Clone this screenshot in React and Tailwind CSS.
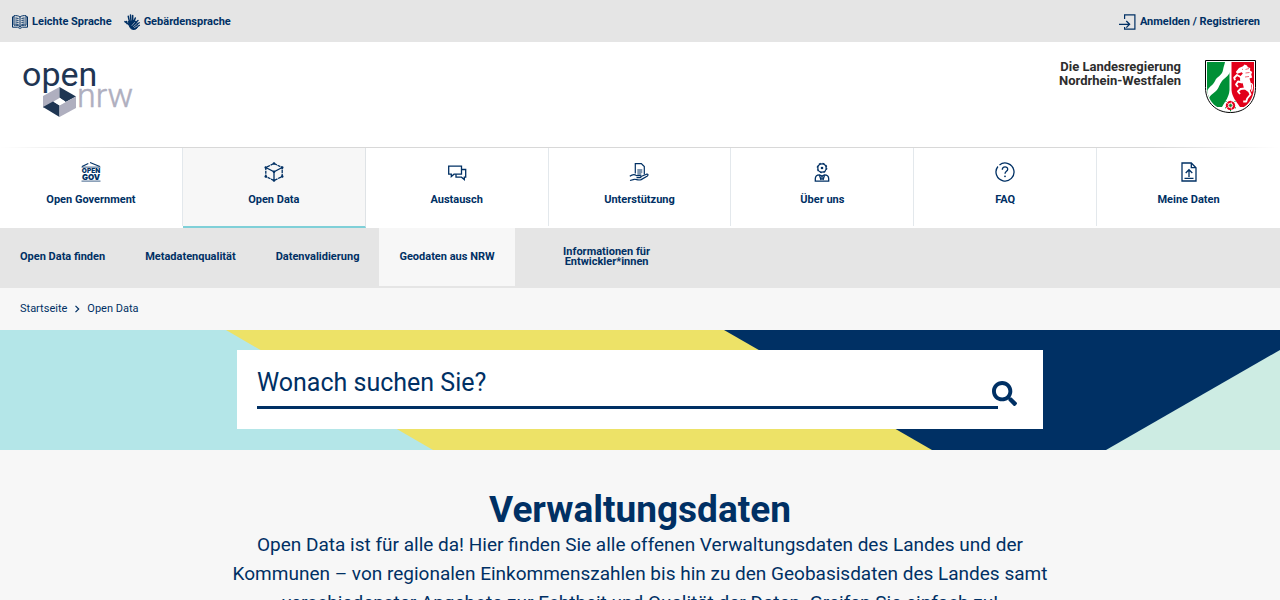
import React from "react";
import { FaSearch } from "react-icons/fa";

const line = {
  viewBox: "0 0 20 20",
  width: 20,
  height: 20,
  fill: "none",
  stroke: "currentColor",
  strokeWidth: 1.3,
  "aria-hidden": true,
};

function BookIcon() {
  return (
    <svg viewBox="0 0 16 16" width="16" height="16" fill="none" stroke="currentColor" strokeWidth="1" aria-hidden="true">
      <path d="M8 3C6.500 1.600 4 1.500 2 1.700v9.500c2-.2 4.500.1 6 1.500 1.500-1.400 4-1.700 6-1.500V1.700C12 1.500 9.500 1.600 8 3zM8 3v9.500" />
      <path d="M2 2.800H.500v10.400h5c1 0 1.500 1.200 2.500 1.200s1.500-1.200 2.500-1.200h5V2.800H14" />
      <path d="M3.300 4c1.300 0 2.300.200 3.300.700M3.300 6c1.300 0 2.300.200 3.300.700M3.300 8c1.300 0 2.300.200 3.300.700M3.300 10c1.300 0 2.300.200 3.300.700M12.700 4c-1.300 0-2.300.200-3.300.700M12.700 6c-1.300 0-2.300.200-3.300.700M12.700 8c-1.300 0-2.300.200-3.300.700M12.700 10c-1.300 0-2.300.200-3.300.700" />
    </svg>
  );
}

function HandsIcon() {
  return (
    <svg viewBox="0 0 16 16" width="16" height="16" fill="none" stroke="currentColor" strokeLinecap="round" aria-hidden="true">
      <path fill="currentColor" d="M4.500 7.500l6-1 2.500 2 1.200 3.500c-.6 1.700-1.700 3-3.700 3.500-2.500.3-4.300-1-5-3z" />
      <path strokeWidth="1.500" d="M5.500 8L4.300 2.300M7 7.500L6.500 1M8.700 7.500V1.600M9.300 9l2-5M5.500 11L.9 7.600M3 9.500L2.500 7.500" />
      <path strokeWidth="1.300" d="M10.500 9.500l3.500-3M11.500 11l3.800-2.200M12 12.500l3.500-1.200" />
      <path stroke="#e5e5e5" strokeWidth=".6" d="M8 11.500l2.500-3M9.500 12.500l3.500-3M10.500 13.500l3.500-2" />
    </svg>
  );
}

function LoginIcon() {
  return (
    <svg viewBox="0 0 17 16" width="17" height="16" fill="none" stroke="currentColor" aria-hidden="true">
      <path strokeWidth="1.200" d="M5.600 5V.8h10.300v14.400H5.600V13" />
      <path strokeWidth="1.300" d="M0 10.300h10.500M7.300 7l3.300 3.300-3.300 3.300" />
    </svg>
  );
}

function OpenGovIcon() {
  return (
    <svg viewBox="0 0 20 20" width="20" height="20" fill="currentColor" aria-hidden="true">
      <path fill="none" stroke="currentColor" strokeWidth="1.100" d="M1 4.600L7.300 1.600M9 .500L18.800 4.600" />
      <path fillOpacity=".6" d="M.500 4.500h19v1.200H.500zM.500 18.600h19v1.200H.500z" />
      <text x="10" y="11.200" textAnchor="middle" fontSize="6.500" fontWeight="900" fontFamily="Inter, sans-serif">OPEN</text>
      <text x="10" y="17.700" textAnchor="middle" fontSize="8" fontWeight="900" fontFamily="Inter, sans-serif">GOV</text>
    </svg>
  );
}

function CubeIcon() {
  const nodes = [[10, 1.500], [1.800, 5.500], [18.200, 5.500], [10, 9.800], [1.800, 14.500], [18.200, 14.500], [10, 18.500]];
  return (
    <svg {...line} strokeWidth="1.300">
      <path strokeDasharray="3.200 .7" d="M10 1.500l8.200 4v9l-8.200 4-8.200-4v-9z" />
      <path d="M1.800 5.500L10 9.800l8.200-4.300M10 9.800v8.700" />
      {nodes.map(([x, y]) => (
        <circle key={x + "-" + y} cx={x} cy={y} r="1.300" fill="currentColor" stroke="none" />
      ))}
    </svg>
  );
}

function ChatIcon() {
  return (
    <svg {...line}>
      <path d="M1.700 4.200h12.800v8H7l-2.700 2.300v-2.300H1.700z" />
      <path d="M14.500 7.500h4.200v7.700h-1.400v2.300l-2.800-2.300H9v-3" />
    </svg>
  );
}

function SupportIcon() {
  return (
    <svg {...line} strokeWidth="1.200">
      <path d="M6.300 11.500V1.600h6l3 3v8M8.300 8h5M8.300 10h5M8.300 12h4" />
      <path d="M.8 14.200c3-2.300 5-2 6.700-.6h3.700c1.300 0 1 2-.2 2H7.500M12 14.500l5.500-2.300c1.600-.4 2 .9.900 1.700l-6.200 3.700c-3 1.300-5-.7-7-.3L1 18.500" />
    </svg>
  );
}

function PersonIcon() {
  return (
    <svg {...line}>
      <circle cx="10" cy="6" r="4.200" />
      <circle cx="10" cy="6" r="4.800" strokeWidth="1.100" strokeDasharray="1.900 1.870" />
      <circle cx="10" cy="6" r="1.300" fill="currentColor" stroke="none" />
      <path d="M7.500 12.800c-3 0-4.200 1.500-4.200 4v2.400h13.400v-2.400c0-2.500-1.200-4-4.200-4L10 14z" />
      <path d="M7.500 13.200L9 18M12.500 13.200L11 18M10 14v3.500" />
    </svg>
  );
}

function FaqIcon() {
  return (
    <svg {...line}>
      <path d="M4.500 2.900A9 9 0 1 1 2.900 4.500" />
      <path d="M7.300 7.700c0-4 5.600-3.700 5.400-.3-.1 2-2.700 2-2.700 4.400" />
      <circle cx="10" cy="14.300" r=".9" fill="currentColor" stroke="none" />
    </svg>
  );
}

function UploadIcon() {
  return (
    <svg {...line}>
      <path d="M3 1h9.300L17 5.700V19H3zM12.300 1v4.700H17" />
      <path d="M10 15V8M6.700 11L10 7.700l3.300 3.300M5.500 16.300h9" />
    </svg>
  );
}

function OpenNrwLogo() {
  return (
    <svg viewBox="0 0 114 54" width="114" height="54" className="overflow-visible" role="img" aria-label="open nrw" fontFamily="Roboto, sans-serif">
      <text x="0" y="22" fontSize="34" fill="#1f3653">open</text>
      <text x="55" y="43" fontSize="34" fontWeight="300" stroke="#afafbf" strokeWidth=".5" fill="#afafbf">nrw</text>
      <path fill="#afafbf" d="M37.500 23L21 32v12l16.500-8.500z" />
      <path fill="#1f3653" d="M37.500 23L54 32.500 43.500 38l-6-4.500z" />
      <path fill="#1f3653" d="M21 43l10-5.500 6.500 4V53z" />
      <path fill="#afafbf" d="M54 32.500V44l-16.500 9V41.500z" />
      <path fill="#fff" d="M31.500 37.500l6-3.500 6 3.500-6 3.800z" />
    </svg>
  );
}

function CoatOfArms() {
  return (
    <svg viewBox="0 0 51 53" width="51" height="53" role="img" aria-label="Landeswappen Nordrhein-Westfalen">
      <defs>
        <clipPath id="shield">
          <path d="M2 2h47v25c0 15-11 24-23.500 24S2 42 2 27z" />
        </clipPath>
      </defs>
      <path fill="#fff" stroke="#000" strokeWidth="1" d="M.500.500h50v27c0 16-11.500 25-25 25S.500 43.500.500 27.500z" />
      <g clipPath="url(#shield)">
        <path fill="#009036" d="M2 2h22.500v28c-.5 7-4 11-7.500 17H2z" />
        <path fill="#e2001a" d="M26.500 2H49v45H35c-4-6-8-10-8.500-17z" />
        <path fill="#fff" d="M20 2h5v10c-1.500 4-5 5.500-8 9-3 3.800-2.500 6.500-6 10-3.500 3.300-5.500 4-7 7L2 32c1-5 6-6.500 8-11 2-5 7-5 8-11 .500-3.500 1.500-5 2-8z" />
        <g fill="#fff">
          <path d="M39.500 4.500L38 6.300l-4 1.600-3.200 4 1.400 1.800 4.600-1.500 1 1.200-2.600 3-.2 4 2.800 3 1.300 5.500 4.200 3 3.200-3.500-.5-5-1.500-5 2.700-1-1-3 1-2.500-2.200-1.500.2-2.500-2.400-.6-.8-1.800z" />
        </g>
        <g fill="none" stroke="#fff" strokeWidth="1.900" strokeLinejoin="round">
          <path d="M36.500 17.500l-4.500-2.500-2.800 2.700.8 2.500M37.500 22.500l-4.500-1-2 3 2 2.300" />
          <path d="M40 28.500l-4.500.5-2.500 2.500 2 2.500M43.500 30l2 4.500-3.300 4-1 3h-3" />
          <path d="M45 24c2-1.500 3 1 2.300 4.500l-.8 3" strokeWidth="1.300" />
        </g>
        <path d="M40.500 9.500l3.500-1M40.500 13l4-.5M40 17l4-.5M37 9.500l1-.3" fill="none" stroke="#e2001a" strokeWidth=".6" />
      </g>
      <circle cx="25.500" cy="45.500" r="3.200" fill="none" stroke="#e2001a" strokeWidth="3" strokeDasharray="3.600 .420" />
      <circle cx="25.500" cy="45.500" r="2.300" fill="none" stroke="#fff" strokeWidth=".8" />
      <circle cx="25.500" cy="45.500" r="1.400" fill="#009036" />
      <path stroke="#009036" strokeWidth="1" d="M21.500 42l-1-1M29.500 42l1-1M21 47.500l-1 .7M30 47.500l1 .7M25.500 50v1.300" />
    </svg>
  );
}

const mainNav = [
  { label: "Open Government", Icon: OpenGovIcon },
  { label: "Open Data", Icon: CubeIcon, active: true },
  { label: "Austausch", Icon: ChatIcon },
  { label: "Unterstützung", Icon: SupportIcon },
  { label: "Über uns", Icon: PersonIcon },
  { label: "FAQ", Icon: FaqIcon },
  { label: "Meine Daten", Icon: UploadIcon },
];

const subNav = [
  { label: "Open Data finden" },
  { label: "Metadatenqualität" },
  { label: "Datenvalidierung" },
  { label: "Geodaten aus NRW", hover: true },
];

function TopBar() {
  return (
    <div className="flex h-[42px] items-center justify-between bg-[#e5e5e5] pt-0.5 pr-5 pl-3 text-[11px] leading-4 font-bold">
      <div className="flex items-center gap-3">
        <a href="#leichte-sprache" className="flex items-center gap-1"><BookIcon />Leichte Sprache</a>
        <a href="#gebaerdensprache" className="flex items-center gap-1"><HandsIcon />Gebärdensprache</a>
      </div>
      <a href="#anmelden" className="flex items-center gap-1"><LoginIcon />Anmelden / Registrieren</a>
    </div>
  );
}

function Header() {
  return (
    <header className="flex h-[105px] items-start justify-between bg-white pt-[18px] pr-6 pl-[22px]">
      <a href="#start" className="pt-1"><OpenNrwLogo /></a>
      <div className="flex items-start gap-6">
        <p className="text-right text-[13px] leading-[14px] font-bold text-[#2d2d2d]">
          Die Landesregierung<br />Nordrhein-Westfalen
        </p>
        <CoatOfArms />
      </div>
    </header>
  );
}

function MainNav() {
  return (
    <nav aria-label="Hauptnavigation" className="bg-white">
      <div className="h-px bg-[linear-gradient(to_right,#ffffff,#d8d8d8_10%,#d8d8d8_90%,#ffffff)]" />
      <ul className="grid h-20 grid-cols-7">
        {mainNav.map(({ label, Icon, active }) => (
          <li key={label} className={active ? "border-r border-b-2 border-r-[#dfe3e6] border-b-[#7fd0d8] bg-[#f7f7f7]" : "mb-0.5 border-r border-[#e3e8ec] last:border-r-0"}>
            <a href={"#" + label} className="flex h-full flex-col items-center gap-2.5 pt-3.5 text-[11px] leading-4 font-bold">
              <Icon />
              {label}
            </a>
          </li>
        ))}
      </ul>
    </nav>
  );
}

function SubNav() {
  return (
    <nav aria-label="Unternavigation" className="bg-[#e5e5e5] pb-0.5">
      <ul className="flex h-[58px] text-center text-[11px] leading-[10px] font-bold">
        {subNav.map(({ label, hover }) => (
          <li key={label} className={hover ? "bg-[#f7f7f7]" : ""}>
            <a href={"#" + label} className="flex h-full items-center px-5">{label}</a>
          </li>
        ))}
        <li className="w-[184px]">
          <a href="#entwickler" className="flex h-full items-center justify-center px-10">Informationen für Entwickler*innen</a>
        </li>
      </ul>
    </nav>
  );
}

function Breadcrumb() {
  return (
    <nav aria-label="Brotkrumen" className="flex h-[42px] items-center gap-1.5 px-5 text-[11px]">
      <a href="#start">Startseite</a>
      <svg viewBox="0 0 8 8" width="8" height="8" fill="none" stroke="currentColor" strokeWidth="1.200" aria-hidden="true">
        <path d="M2.500.800L5.700 4 2.500 7.200" />
      </svg>
      <span>Open Data</span>
    </nav>
  );
}

function SearchHero() {
  return (
    <section className="relative h-[120px] bg-[#b4e6e8] px-5 pt-5">
      <svg className="absolute inset-0 h-full w-full" viewBox="0 0 1280 120" preserveAspectRatio="none" aria-hidden="true">
        <path fill="#ede267" d="M226 0h520l200 120H433z" />
        <path fill="#003064" d="M724 0h556v120H932z" />
        <path fill="#cdece3" d="M1280 20v100H1106z" />
      </svg>
      <form className="relative mx-auto flex h-[79px] max-w-[806px] items-start bg-white px-5 pt-2">
        <label htmlFor="suche" className="sr-only">Wonach suchen Sie?</label>
        <input
          id="suche"
          type="text"
          placeholder="Wonach suchen Sie?"
          className="h-[51px] min-w-0 flex-1 border-b-[3px] border-[#003064] text-[25px] leading-10 outline-none placeholder:text-[#003064] placeholder:opacity-100"
        />
        <button type="button" aria-label="Suchen" className="-ml-2 flex w-[33px] justify-center pt-[23px] pr-1">
          <FaSearch size={25} />
        </button>
      </form>
    </section>
  );
}

export default function App() {
  return (
    <div className="h-screen overflow-hidden bg-[#f7f7f7] font-[Roboto,'Liberation_Sans',sans-serif] text-[#003064]">
      <TopBar />
      <Header />
      <MainNav />
      <SubNav />
      <Breadcrumb />
      <main>
        <SearchHero />
        <section className="mx-auto max-w-[820px] pt-10 text-center">
          <h1 className="text-[37px] leading-10 font-bold">Verwaltungsdaten</h1>
          <p className="text-[19px] leading-[29px]">
            Open Data ist für alle da! Hier finden Sie alle offenen Verwaltungsdaten des Landes und der Kommunen – von regionalen Einkommenszahlen bis hin zu den Geobasisdaten des Landes samt verschiedenster Angebote zur Echtheit und Qualität der Daten. Greifen Sie einfach zu!
          </p>
        </section>
      </main>
    </div>
  );
}
